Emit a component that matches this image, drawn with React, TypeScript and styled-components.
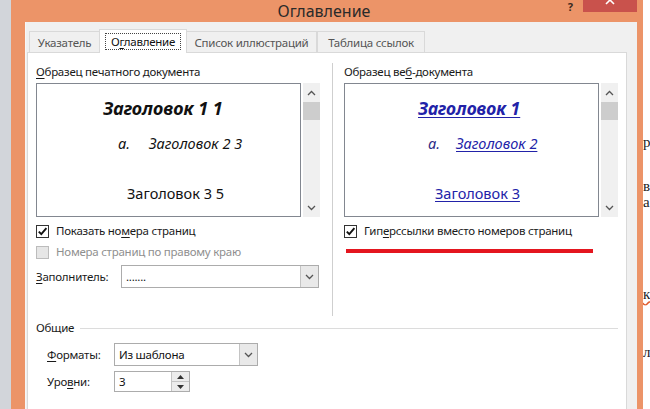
import React from "react";
import styled, { createGlobalStyle } from "styled-components";

const Global = createGlobalStyle`
  html, body { margin: 0; padding: 0; }
  body {
    width: 650px; height: 409px; overflow: hidden; background: #fff;
    font-family: "Noto Sans", "Open Sans", sans-serif;
  }
  * { box-sizing: border-box; }
`;

const Screen = styled.div`
  display: flex;
  width: 650px;
  height: 409px;
  overflow: hidden;
`;

const BackLeft = styled.div`
  width: 11px;
  flex: none;
  background: #d2d5da;
`;

const BackRight = styled.div`
  width: 7px;
  flex: none;
  background: #fff;
  display: flex;
  flex-direction: column;
  overflow: hidden;
  font-family: "Liberation Serif", serif;
  font-size: 15px;
  line-height: 16px;
  color: #222;
`;

const DocLetter = styled.div<{ $top: number; $squiggle?: boolean }>`
  margin-top: ${(p) => p.$top}px;
  height: 16px;
  white-space: nowrap;
  text-decoration: ${(p) => (p.$squiggle ? "underline wavy #e05a2a" : "none")};
`;

const Window = styled.div`
  width: 632px;
  flex: none;
  display: flex;
  flex-direction: column;
  background: #ec9468;
`;

const TitleBar = styled.div`
  height: 22px;
  flex: none;
  display: grid;
  grid-template-columns: 1fr auto 1fr;
  padding-right: 6px;
`;

const Title = styled.div`
  grid-column: 2;
  font-size: 16px;
  line-height: 22px;
  height: 22px;
  color: #2a2a2a;
  white-space: nowrap;
`;

const TitleControls = styled.div`
  grid-column: 3;
  display: flex;
  justify-content: flex-end;
  align-items: flex-start;
`;

const HelpMark = styled.div`
  font-size: 11px;
  line-height: 13px;
  height: 13px;
  margin-right: 10px;
  color: #3a2a20;
  font-weight: 700;
`;

const CloseBtn = styled.div`
  width: 54px;
  height: 12px;
  background: #c9524c;
  display: flex;
  justify-content: center;
  align-items: flex-start;
  overflow: hidden;
`;

const Frame = styled.div`
  flex: 1;
  display: flex;
  padding: 0 6px 0 14px;
  min-height: 0;
`;

const Body = styled.div`
  flex: 1;
  background: #f0f0f0;
  display: flex;
  flex-direction: column;
  padding: 7px 10px 0 1px;
  border-left: 1px solid #f7f7f7;
  font-size: 11.5px;
  letter-spacing: -0.25px;
`;

const TabRow = styled.div`
  display: flex;
  align-items: flex-end;
  height: 23px;
  padding-left: 2px;
  position: relative;
  z-index: 1;
`;

const Tab = styled.div<{ $w: number; $active?: boolean }>`
  width: ${(p) => p.$w}px;
  height: ${(p) => (p.$active ? 24 : 21)}px;
  margin-bottom: ${(p) => (p.$active ? -1 : 0)}px;
  margin-left: ${(p) => (p.$active ? -1 : 0)}px;
  margin-right: ${(p) => (p.$active ? -1 : 0)}px;
  background: ${(p) => (p.$active ? "#fff" : "#f0f0f0")};
  border: 1px solid #d9d9d9;
  border-bottom: none;
  display: flex;
  align-items: center;
  justify-content: center;
  font-size: 11.5px;
  color: ${(p) => (p.$active ? "#111" : "#555")};
  white-space: nowrap;
  position: relative;
  z-index: ${(p) => (p.$active ? 2 : 1)};
`;

const FocusBox = styled.span`
  border: 1px dotted #444;
  padding: 0 5px;
  line-height: 15px;
`;

const Panel = styled.div`
  flex: 1;
  background: #fff;
  border: 1px solid #d9d9d9;
  border-bottom: none;
  display: flex;
  flex-direction: column;
`;

const TopSection = styled.div`
  display: grid;
  grid-template-columns: 304px 1px 1fr;
  height: 263px;
`;

const Column = styled.div<{ $pad: number }>`
  padding-left: ${(p) => p.$pad}px;
  padding-top: 11px;
  display: flex;
  flex-direction: column;
`;

const VDivider = styled.div`
  margin-top: 10px;
  background: #cfcfcf;
`;

const Label = styled.div<{ $disabled?: boolean }>`
  font-size: 11.5px;
  line-height: 16px;
  height: 16px;
  color: ${(p) => (p.$disabled ? "#8f8f8f" : "#1a1a1a")};
  white-space: nowrap;
`;

const Key = styled.span`
  text-decoration: underline;
  text-underline-offset: 2px;
`;

const PreviewRow = styled.div`
  display: flex;
  gap: 2px;
  height: 134px;
  margin-top: 3px;
`;

const PreviewBox = styled.div<{ $w: number }>`
  width: ${(p) => p.$w}px;
  border: 1px solid #828790;
  background: #fff;
  display: flex;
  flex-direction: column;
  overflow: hidden;
  font-family: "Noto Sans", "Open Sans", sans-serif;
  letter-spacing: 0;
  color: #111;
`;

const PLine = styled.div<{
  $top: number;
  $indent: number;
  $size: number;
  $bold?: boolean;
  $italic?: boolean;
}>`
  margin-top: ${(p) => p.$top}px;
  padding-left: ${(p) => p.$indent}px;
  font-size: ${(p) => p.$size}px;
  line-height: 20px;
  height: 20px;
  font-weight: ${(p) => (p.$bold ? 700 : 400)};
  font-style: ${(p) => (p.$italic ? "italic" : "normal")};
  white-space: nowrap;
  display: flex;
`;

const Marker = styled.span<{ $w: number; $link?: boolean }>`
  width: ${(p) => p.$w}px;
  flex: none;
  color: ${(p) => (p.$link ? "#2b2b85" : "inherit")};
`;

const Link = styled.span`
  color: #2222a8;
  text-decoration: underline;
  text-decoration-thickness: 1px;
  text-underline-offset: 2px;
`;

const Scrollbar = styled.div`
  width: 17px;
  background: #f0f0f0;
  display: flex;
  flex-direction: column;
  align-items: center;
`;

const ScrollArrow = styled.div`
  height: 19px;
  width: 17px;
  display: flex;
  align-items: center;
  justify-content: center;
`;

const Thumb = styled.div`
  width: 17px;
  height: 18px;
  background: #cdcdcd;
`;

const ScrollFill = styled.div`
  flex: 1;
`;

const CheckRow = styled.div<{ $top: number }>`
  display: flex;
  align-items: center;
  gap: 7px;
  height: 16px;
  margin-top: ${(p) => p.$top}px;
`;

const CheckBox = styled.div<{ $disabled?: boolean }>`
  width: 13px;
  height: 13px;
  flex: none;
  border: 1px solid ${(p) => (p.$disabled ? "#bcbcbc" : "#333")};
  background: ${(p) => (p.$disabled ? "#e6e6e6" : "#fff")};
  display: flex;
  align-items: center;
  justify-content: center;
`;

const RedMark = styled.div`
  margin-top: 10px;
  margin-left: 2px;
  width: 247px;
  height: 4px;
  background: #e4161f;
`;

const FieldRow = styled.div<{ $top: number; $labelW: number }>`
  display: grid;
  grid-template-columns: ${(p) => p.$labelW}px auto;
  align-items: center;
  margin-top: ${(p) => p.$top}px;
`;

const Select = styled.div<{ $w: number; $h: number }>`
  width: ${(p) => p.$w}px;
  height: ${(p) => p.$h}px;
  border: 1px solid #acacac;
  background: #fff;
  display: flex;
  align-items: stretch;
  font-size: 11.5px;
  color: #111;
`;

const SelectValue = styled.div`
  flex: 1;
  padding-left: 4px;
  display: flex;
  align-items: center;
  white-space: nowrap;
`;

const DropBtn = styled.div`
  width: 18px;
  background: #e9e9e9;
  border-left: 1px solid #c4c4c4;
  display: flex;
  align-items: center;
  justify-content: center;
`;

const SpinBtns = styled.div`
  width: 18px;
  display: flex;
  flex-direction: column;
  border-left: 1px solid #c4c4c4;
`;

const SpinHalf = styled.div<{ $top?: boolean }>`
  flex: 1;
  background: #ececec;
  border-top: ${(p) => (p.$top ? "none" : "1px solid #c4c4c4")};
  display: flex;
  align-items: center;
  justify-content: center;
`;

const GroupHead = styled.div`
  display: flex;
  align-items: center;
  gap: 6px;
  padding-left: 8px;
  padding-right: 8px;
  margin-top: 4px;
  height: 16px;
`;

const HLine = styled.div`
  flex: 1;
  height: 1px;
  background: #dcdcdc;
`;

const GroupBody = styled.div`
  padding-left: 19px;
  display: flex;
  flex-direction: column;
`;

const ChevronDown = () => (
  <svg width="9" height="6" viewBox="0 0 9 6">
    <path d="M1 1 L4.5 4.5 L8 1" fill="none" stroke="#555" strokeWidth="1.3" />
  </svg>
);

const ChevronUp = () => (
  <svg width="9" height="6" viewBox="0 0 9 6">
    <path d="M1 5 L4.5 1.5 L8 5" fill="none" stroke="#555" strokeWidth="1.3" />
  </svg>
);

const Check = () => (
  <svg width="11" height="11" viewBox="0 0 11 11">
    <path d="M1.8 5.6 L4.3 8.2 L9.4 2.2" fill="none" stroke="#111" strokeWidth="1.9" />
  </svg>
);

const TriUp = () => (
  <svg width="7" height="4" viewBox="0 0 7 4">
    <path d="M0 4 L3.5 0 L7 4 Z" fill="#333" />
  </svg>
);

const TriDown = () => (
  <svg width="7" height="4" viewBox="0 0 7 4">
    <path d="M0 0 L3.5 4 L7 0 Z" fill="#333" />
  </svg>
);

const ScrollBarView = () => (
  <Scrollbar>
    <ScrollArrow>
      <ChevronUp />
    </ScrollArrow>
    <Thumb />
    <ScrollFill />
    <ScrollArrow>
      <ChevronDown />
    </ScrollArrow>
  </Scrollbar>
);

export default function App() {
  return (
    <Screen>
      <Global />
      <BackLeft />
      <Window>
        <TitleBar>
          <Title>Оглавление</Title>
          <TitleControls>
            <HelpMark>?</HelpMark>
            <CloseBtn>
              <svg width="10" height="6" viewBox="0 0 10 6">
                <path d="M1 -4 L9 4 M9 -4 L1 4" stroke="#fff" strokeWidth="1.6" />
              </svg>
            </CloseBtn>
          </TitleControls>
        </TitleBar>
        <Frame>
          <Body>
            <TabRow>
              <Tab $w={71}>Указатель</Tab>
              <Tab $w={88} $active>
                <FocusBox>
                  О<Key>г</Key>лавление
                </FocusBox>
              </Tab>
              <Tab $w={131}>Список иллюстраций</Tab>
              <Tab $w={108}>Таблица ссылок</Tab>
            </TabRow>
            <Panel>
              <TopSection>
                <Column $pad={8}>
                  <Label>
                    <Key>О</Key>бразец печатного документа
                  </Label>
                  <PreviewRow>
                    <PreviewBox $w={265}>
                      <PLine $top={14} $indent={66} $size={18} $bold $italic>
                        Заголовок 1 1
                      </PLine>
                      <PLine $top={15} $indent={81} $size={14.5} $italic>
                        <Marker $w={31}>a.</Marker>
                        Заголовок 2 3
                      </PLine>
                      <PLine $top={30} $indent={90} $size={14.5}>
                        Заголовок 3 5
                      </PLine>
                    </PreviewBox>
                    <ScrollBarView />
                  </PreviewRow>
                  <CheckRow $top={6}>
                    <CheckBox>
                      <Check />
                    </CheckBox>
                    <Label>
                      Показать но<Key>м</Key>ера страниц
                    </Label>
                  </CheckRow>
                  <CheckRow $top={5}>
                    <CheckBox $disabled />
                    <Label $disabled>Номера страниц по правому краю</Label>
                  </CheckRow>
                  <FieldRow $top={5} $labelW={85}>
                    <Label>
                      <Key>З</Key>аполнитель:
                    </Label>
                    <Select $w={198} $h={23}>
                      <SelectValue>.......</SelectValue>
                      <DropBtn>
                        <ChevronDown />
                      </DropBtn>
                    </Select>
                  </FieldRow>
                </Column>
                <VDivider />
                <Column $pad={11}>
                  <Label>
                    Образец ве<Key>б</Key>-документа
                  </Label>
                  <PreviewRow>
                    <PreviewBox $w={255}>
                      <PLine $top={14} $indent={73} $size={17.5} $bold $italic>
                        <Link>Заголовок 1</Link>
                      </PLine>
                      <PLine $top={15} $indent={83} $size={14.5} $italic>
                        <Marker $w={28} $link>
                          a.
                        </Marker>
                        <Link>Заголовок 2</Link>
                      </PLine>
                      <PLine $top={30} $indent={90} $size={14.5}>
                        <Link>Заголовок 3</Link>
                      </PLine>
                    </PreviewBox>
                    <ScrollBarView />
                  </PreviewRow>
                  <CheckRow $top={6}>
                    <CheckBox>
                      <Check />
                    </CheckBox>
                    <Label>
                      Гип<Key>е</Key>рссылки вместо номеров страниц
                    </Label>
                  </CheckRow>
                  <RedMark />
                </Column>
              </TopSection>
              <GroupHead>
                <Label>Общие</Label>
                <HLine />
              </GroupHead>
              <GroupBody>
                <FieldRow $top={7} $labelW={67}>
                  <Label>
                    <Key>Ф</Key>орматы:
                  </Label>
                  <Select $w={144} $h={23}>
                    <SelectValue>Из шаблона</SelectValue>
                    <DropBtn>
                      <ChevronDown />
                    </DropBtn>
                  </Select>
                </FieldRow>
                <FieldRow $top={5} $labelW={67}>
                  <Label>
                    Уро<Key>в</Key>ни:
                  </Label>
                  <Select $w={76} $h={21}>
                    <SelectValue>3</SelectValue>
                    <SpinBtns>
                      <SpinHalf $top>
                        <TriUp />
                      </SpinHalf>
                      <SpinHalf>
                        <TriDown />
                      </SpinHalf>
                    </SpinBtns>
                  </Select>
                </FieldRow>
              </GroupBody>
            </Panel>
          </Body>
        </Frame>
      </Window>
      <BackRight>
        <DocLetter $top={134}>р</DocLetter>
        <DocLetter $top={28}>в</DocLetter>
        <DocLetter $top={0}>а</DocLetter>
        <DocLetter $top={76} $squiggle>к</DocLetter>
        <DocLetter $top={42}>л</DocLetter>
      </BackRight>
    </Screen>
  );
}
